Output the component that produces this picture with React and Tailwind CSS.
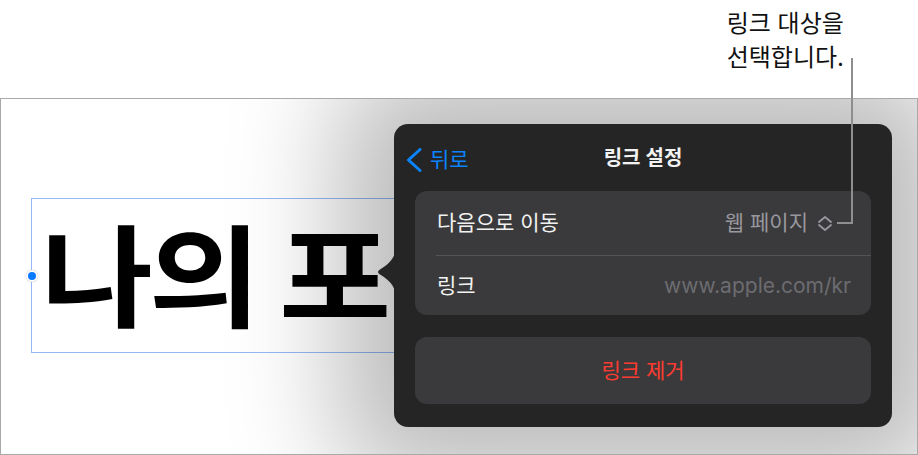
import React from 'react';

const FONT = { fontFamily: '"Inter", "Noto Sans CJK KR", sans-serif' };

function BackChevron() {
  return (
    <svg width="16" height="24" viewBox="0 0 16 24" fill="none">
      <path d="M14 1.5 L2.5 12 L14 22.5" stroke="#0a84ff" strokeWidth="3" strokeLinecap="round" strokeLinejoin="round" />
    </svg>
  );
}

function UpDown() {
  return (
    <svg width="16" height="17" viewBox="0 0 16 17" fill="none">
      <path d="M2 7 L8 2 L14 7" stroke="#98989e" strokeWidth="1.8" strokeLinecap="round" strokeLinejoin="round" />
      <path d="M2 10 L8 15 L14 10" stroke="#98989e" strokeWidth="1.8" strokeLinecap="round" strokeLinejoin="round" />
    </svg>
  );
}

function LinkPopover() {
  return (
    <div className="absolute left-[393px] top-[25px] w-[498px] h-[303px] rounded-[14px] bg-[#252525] shadow-[0_0_110px_55px_rgba(0,0,0,0.27)] flex flex-col px-[21px]">
      {/* pointer */}
      <svg className="absolute left-[-18px] top-[126px]" width="19" height="44" viewBox="0 0 19 44">
        <path d="M19 0 C19 8 13 14 4 19.5 Q0 22 4 24.5 C13 30 19 36 19 44 Z" fill="#252525" />
      </svg>

      <div className="h-[67px] relative flex items-center justify-center">
        <div className="absolute left-[-9px] top-[20px] flex items-center gap-[8px] text-[#0a84ff]">
          <BackChevron />
          <span className="text-[21px]">뒤로</span>
        </div>
        <span className="text-[20px] font-semibold text-[#f2f2f2]">링크 설정</span>
      </div>

      <div className="rounded-[12px] bg-[#3a3a3c] flex flex-col">
        <div className="h-[64px] flex items-center justify-between pl-[22px] pr-[38px]">
          <span className="text-[21px] text-[#f2f2f2]">다음으로 이동</span>
          <div className="flex items-center gap-[9px]">
            <span className="text-[21px] text-[#98989e]">웹 페이지</span>
            <UpDown />
          </div>
        </div>
        <div className="ml-[21px] h-px bg-[#545456]" />
        <div className="h-[59px] flex items-center justify-between pl-[22px] pr-[20px]">
          <span className="text-[21px] text-[#f2f2f2]">링크</span>
          <span className="text-[21px] text-[#6c6c70]">www.apple.com/kr</span>
        </div>
      </div>

      <button className="mt-[22px] h-[67px] rounded-[12px] bg-[#3a3a3c] flex items-center justify-center">
        <span className="text-[21px] text-[#ff3b30]">링크 제거</span>
      </button>
    </div>
  );
}

export default function App() {
  return (
    <div className="relative w-[918px] h-[455px] bg-white flex flex-col" style={FONT}>
      <div className="h-[98px] flex justify-end pr-[74px] pt-[7px]">
        <div className="text-[24px] leading-[34px] text-[#111]">
          <div>링크 대상을</div>
          <div>선택합니다.</div>
        </div>
      </div>

      <div className="relative h-[357px] border border-[#a9a9a9] overflow-hidden">
        {/* text box */}
        <div className="absolute left-[30px] top-[99px] w-[600px] h-[155px] border border-[#94b9f6]">
          <div className="pl-[8px] pt-[10px] origin-left scale-x-[1.1] text-[111px] leading-[140px] font-bold text-black tracking-[-4px] [word-spacing:-2px] whitespace-nowrap">
            나의 포
          </div>
          <div className="absolute left-[-6px] top-[71px] w-[12px] h-[12px] rounded-full bg-[#0a7aff] border-2 border-white shadow-[0_0_1px_rgba(0,0,0,0.4)]" />
        </div>

        <LinkPopover />
      </div>

      {/* callout line */}
      <svg className="absolute left-0 top-0 pointer-events-none" width="918" height="455">
        <polyline points="852,58 852,223 837,223" fill="none" stroke="#8e8e8e" strokeWidth="2" />
      </svg>
    </div>
  );
}
